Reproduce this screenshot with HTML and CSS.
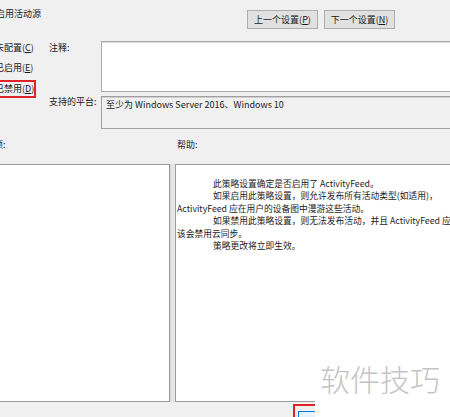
FILE: index.html
```html
<!DOCTYPE html>
<html lang="zh-CN">
<head>
<meta charset="utf-8">
<title>启用活动源</title>
<link rel="stylesheet" href="styles.css">
</head>
<body>
<div class="dialog">
  <div class="header">
    <div class="title">启用活动源</div>
    <div class="nav">
      <button class="btn">上一个设置(<u>P</u>)</button>
      <button class="btn">下一个设置(<u>N</u>)</button>
    </div>
  </div>
  <div class="settings">
    <div class="radios">
      <div class="radio">未配置(<u>C</u>)</div>
      <div class="radio">已启用(<u>E</u>)</div>
      <div class="radio radio-marked">已禁用(<u>D</u>)</div>
    </div>
    <div class="label label-comment">注释:</div>
    <div class="comment"></div>
    <div class="label label-platform">支持的平台:</div>
    <div class="platform">至少为 Windows Server 2016、Windows 10</div>
  </div>
  <div class="section-labels">
    <div class="sec-label options-label">选项:</div>
    <div class="sec-label help-label">帮助:</div>
  </div>
  <div class="panes">
    <div class="pane pane-options"></div>
    <div class="splitter"></div>
    <div class="pane pane-help">
      <p class="para">此策略设置确定是否启用了 ActivityFeed。</p>
      <p class="para">如果启用此策略设置，则允许发布所有活动类型(如适用)，<br>ActivityFeed 应在用户的设备图中漫游这些活动。</p>
      <p class="para">如果禁用此策略设置，则无法发布活动，并且 ActivityFeed 应<br>该会禁用云同步。</p>
      <p class="para">策略更改将立即生效。</p>
    </div>
  </div>
  <div class="footer">
    <button class="btn btn-ok">确定</button>
  </div>
</div>
<div class="highlight"></div>
<div class="watermark">软件技巧</div>
</body>
</html>
```
FILE: styles.css
```css
html, body {
  margin: 0;
  padding: 0;
}
body {
  width: 450px;
  height: 417px;
  overflow: hidden;
  position: relative;
  background: #f0f0f0;
  font-family: "Noto Sans CJK SC", "Noto Sans", sans-serif;
  font-size: 9px;
  color: #1a1a1a;
}
.dialog {
  width: 450px;
  height: 417px;
  overflow: hidden;
}
.header {
  height: 41px;
  display: grid;
  grid-template-columns: 247px auto;
  align-items: start;
}
.title {
  margin-left: -4px;
  padding-top: 8px;
  line-height: 12px;
  white-space: nowrap;
}
.nav {
  display: flex;
  gap: 6px;
  margin-top: 10px;
}
.btn {
  font-family: inherit;
  font-size: 9px;
  color: #1a1a1a;
  background: #e1e1e1;
  border: 1px solid #adadad;
  height: 19px;
  width: 71px;
  padding: 0;
  line-height: 17px;
  white-space: nowrap;
}
.settings {
  display: grid;
  grid-template-columns: 49px 52px 1fr;
  row-gap: 4px;
}
.radios {
  grid-column: 1;
  grid-row: 1 / span 2;
  display: flex;
  flex-direction: column;
  gap: 6px;
}
.radio {
  line-height: 14px;
  margin-left: -5px;
  white-space: nowrap;
}
.radio-marked {
  margin-top: -1px;
  margin-left: -20px;
  padding: 0 1px 0 13px;
  width: 38px;
  border: 2px solid #e0222b;
}
.label {
  grid-column: 2;
  line-height: 12px;
  white-space: nowrap;
}
.label-comment {
  grid-row: 1;
  padding-top: 1px;
}
.label-platform {
  grid-row: 2;
  padding-top: 0;
}
.comment {
  grid-column: 3;
  grid-row: 1;
  height: 49px;
  margin-right: -20px;
  background: #ffffff;
  border: 1px solid #a9a9a9;
  box-shadow: inset 0 1px 0 #dcdcdc;
}
.platform {
  grid-column: 3;
  grid-row: 2;
  margin-right: -20px;
  background: #f0f0f0;
  border: 1px solid #a0a0a0;
  box-shadow: inset 0 1px 0 #cfcfcf;
  padding-left: 4px;
  padding-top: 2px;
  box-sizing: border-box;
  height: 33px;
  line-height: 12px;
  white-space: nowrap;
}
.section-labels {
  height: 35px;
  display: grid;
  grid-template-columns: 175px 1fr;
}
.sec-label {
  padding-top: 10px;
  line-height: 12px;
  white-space: nowrap;
}
.options-label {
  margin-left: -15px;
}
.help-label {
  padding-left: 2px;
}
.panes {
  display: flex;
  height: 238px;
  margin-left: -10px;
}
.pane {
  flex-shrink: 0;
  background: #ffffff;
  border: 1px solid #9a9a9a;
  box-sizing: border-box;
  height: 238px;
}
.pane-options {
  width: 180px;
}
.splitter {
  flex-shrink: 0;
  width: 5px;
  background: #e6e6e6;
  border-left: 1px solid #d4d4d4;
  box-sizing: border-box;
}
.pane-help {
  width: 300px;
  padding: 13px 0 0 1px;
  font-size: 8.75px;
  line-height: 12.4px;
  white-space: nowrap;
}
.para {
  margin: 0;
  text-indent: 36px;
}
.footer {
  height: 15px;
  padding-left: 298px;
  padding-top: 9px;
  box-sizing: border-box;
  overflow: hidden;
}
.btn-ok {
  width: 70px;
  height: 6px;
  background: #e5f1fb;
  border: 1px solid #0078d7;
  border-bottom: none;
}
.highlight {
  position: absolute;
  left: 293px;
  top: 404px;
  width: 80px;
  bottom: 0;
  border: 2px solid #e0222b;
  border-bottom: none;
}
.watermark {
  position: absolute;
  left: 315px;
  top: 358px;
  right: 0;
  bottom: 0;
  background: #ffffff;
  color: #c4c4c4;
  font-size: 30px;
  font-weight: 300;
  line-height: 40px;
  padding-left: 5px;
  white-space: nowrap;
}
```
